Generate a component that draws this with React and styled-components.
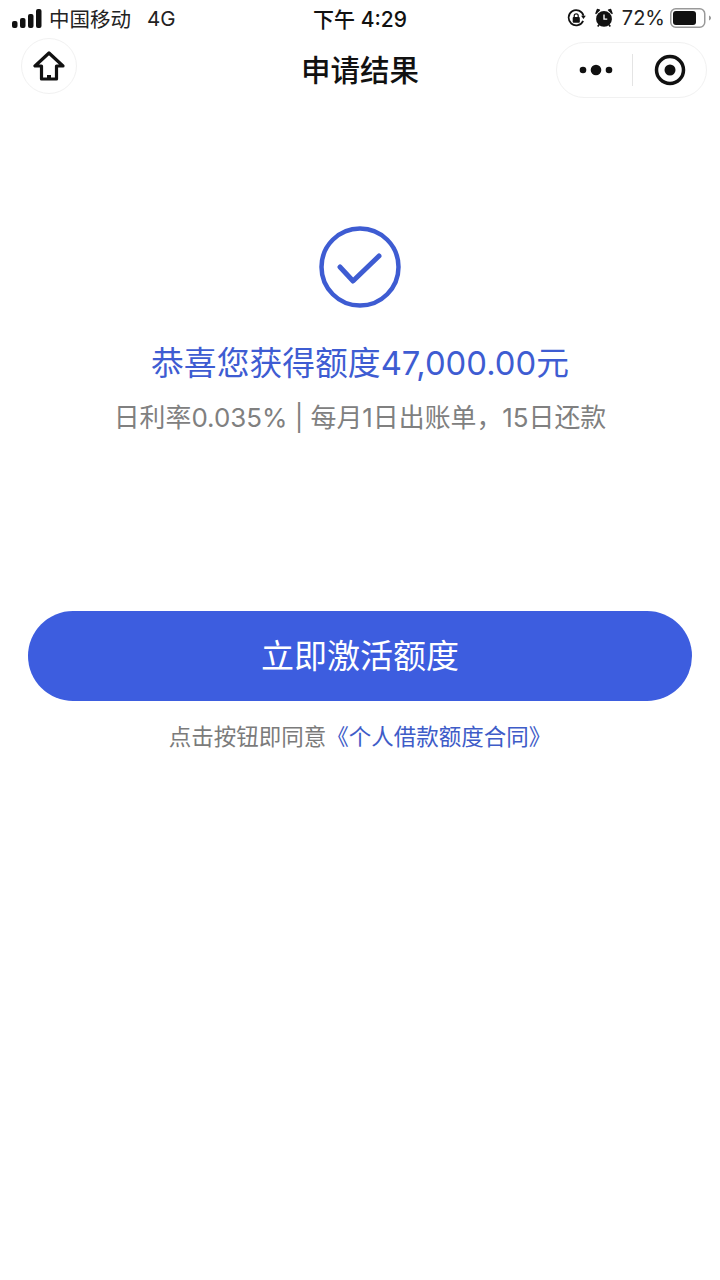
import React from "react";
import styled, { createGlobalStyle } from "styled-components";

const CJK = `"Noto Sans CJK SC", sans-serif`;
const UI = `Inter, "Noto Sans CJK SC", sans-serif`;

const Global = createGlobalStyle`
  html, body { margin: 0; padding: 0; background: #fff; }
  * { box-sizing: border-box; }
`;

const Page = styled.div`
  width: 720px;
  height: 1280px;
  overflow: hidden;
  background: #fff;
  display: flex;
  flex-direction: column;
  font-family: ${UI};
`;

const StatusBar = styled.div`
  height: 36px;
  padding: 0 9px;
  display: grid;
  grid-template-columns: 1fr auto 1fr;
  align-items: center;
  color: #111;
  font-size: 20px;
`;
const StatusLeft = styled.div`
  display: flex;
  align-items: center;
  gap: 7px;
  padding-left: 3px;
`;
const StatusRight = styled.div`
  display: flex;
  align-items: center;
  justify-content: flex-end;
  gap: 9px;
`;
const Carrier = styled.span`
  font-family: ${CJK};
  font-size: 20.5px;
  color: #222;
`;
const Network = styled.span`
  margin-left: 9px;
  font-size: 20.5px;
  color: #222;
`;
const Clock = styled.span`
  font-size: 21px;
  font-weight: 500;
`;
const Percent = styled.span`
  margin-right: -4px;
  font-size: 20px;
  color: #222;
`;

const NavBar = styled.div`
  height: 60px;
  padding: 0 13px 0 21px;
  display: flex;
  align-items: center;
  justify-content: space-between;
  position: relative;
`;
const NavTitle = styled.h1`
  position: absolute;
  left: 0;
  right: 0;
  margin: 4px 0 0;
  text-align: center;
  font-family: ${CJK};
  font-size: 29.5px;
  font-weight: 500;
  color: #111;
`;
const HomeButton = styled.div`
  width: 56px;
  height: 56px;
  border: 1px solid #f1f1f1;
  border-radius: 50%;
  display: flex;
  align-items: center;
  justify-content: center;
`;
const Capsule = styled.div`
  width: 151px;
  height: 56px;
  margin-top: 7px;
  padding-left: 2px;
  border: 1px solid #f1f1f1;
  border-radius: 28px;
  display: flex;
  align-items: center;
`;
const CapsuleCell = styled.div`
  flex: 1;
  display: flex;
  align-items: center;
  justify-content: center;
`;
const CapsuleLine = styled.div`
  width: 1px;
  height: 32px;
  background: #e4e4e4;
`;

const Result = styled.section`
  margin-top: 130px;
  display: flex;
  flex-direction: column;
  align-items: center;
`;
const Headline = styled.h2`
  margin: 32px 0 0;
  font-family: ${UI};
  font-size: 32.8px;
  line-height: 46px;
  font-weight: 400;
  color: #3e5cd2;
`;
const Terms = styled.p`
  margin: 14px 0 0;
  font-size: 25.9px;
  line-height: 36px;
  color: #808080;
`;

const Action = styled.section`
  margin-top: 175px;
  padding: 0 28px;
  display: flex;
  flex-direction: column;
  align-items: center;
`;
const Activate = styled.button`
  width: 100%;
  height: 90px;
  padding: 0 0 4px;
  border: 0;
  border-radius: 45px;
  background: #3d5ddf;
  color: #fff;
  font-family: ${CJK};
  font-size: 33px;
`;
const Agreement = styled.p`
  margin: 18px 0 0;
  font-family: ${CJK};
  font-size: 22.5px;
  line-height: 32px;
  color: #7b7b7b;
`;
const ContractLink = styled.span`
  color: #3e5cc8;
`;

const SignalIcon = () => (
  <svg width="30" height="19" viewBox="0 0 30 19" fill="#111">
    <rect x="0" y="12" width="5.500" height="7" rx="2" />
    <rect x="8" y="9" width="5.500" height="10" rx="2" />
    <rect x="16" y="5" width="5.500" height="14" rx="2" />
    <rect x="24" y="0" width="5.500" height="19" rx="2" />
  </svg>
);

const RotationLockIcon = () => (
  <svg width="19" height="19" viewBox="0 0 20 20" fill="none">
    <path d="M17 12.500A8 8 0 1 1 17.400 7" stroke="#111" strokeWidth="1.800" />
    <path d="M14.800 7.200h5l-2.500 3.200z" fill="#111" />
    <rect x="6" y="8.500" width="7.500" height="6" rx="1" fill="#111" />
    <path d="M7.600 9V7.200a2.100 2.100 0 0 1 4.200 0V9" stroke="#111" strokeWidth="1.300" />
  </svg>
);

const AlarmIcon = () => (
  <svg width="18" height="20" viewBox="0 0 20 21" fill="none">
    <circle cx="10" cy="11.500" r="8.800" fill="#111" />
    <path d="M10 6.500v5.200h3.600" stroke="#fff" strokeWidth="1.500" />
    <path d="M1 5.500 5 1.600 2.600 1z M19 5.500 15 1.600 17.400 1z" fill="#111" stroke="#111" strokeWidth="1.400" strokeLinejoin="round" />
    <path d="M4.500 18 3 20M15.500 18 17 20" stroke="#111" strokeWidth="1.800" />
  </svg>
);

const BatteryIcon = () => (
  <svg width="41" height="20" viewBox="0 0 41 20" fill="none">
    <rect x="0.750" y="0.750" width="34" height="18.500" rx="5" stroke="#999" strokeWidth="1.500" />
    <rect x="3" y="3" width="23" height="14" rx="3" fill="#111" />
    <path d="M39 7.500c1.200.4 2 1.400 2 2.500s-.8 2.100-2 2.500z" fill="#999" />
  </svg>
);

const HomeIcon = () => (
  <svg width="32" height="30" viewBox="0 0 32 30" fill="none" stroke="#111" strokeWidth="3.200" strokeLinejoin="round">
    <path d="M16 2 2 15h6.500v13h15V15H30z" />
    <path d="M16 28v-4" strokeWidth="4" />
  </svg>
);

const MoreIcon = () => (
  <svg width="34" height="12" viewBox="0 0 34 12" fill="#111">
    <circle cx="4" cy="6" r="3.300" />
    <circle cx="17" cy="6" r="5.300" />
    <circle cx="30" cy="6" r="3.300" />
  </svg>
);

const TargetIcon = () => (
  <svg width="32" height="32" viewBox="0 0 32 32" fill="none">
    <circle cx="16" cy="16" r="13.500" stroke="#111" strokeWidth="3.500" />
    <circle cx="16" cy="16" r="5.500" fill="#111" />
  </svg>
);

const SuccessIcon = () => (
  <svg width="82" height="82" viewBox="0 0 82 82" fill="none" stroke="#3e5cd2" strokeLinecap="round" strokeLinejoin="round">
    <circle cx="41" cy="41" r="38.500" strokeWidth="4.500" />
    <path d="M21 41 L34 55 L60 30" strokeWidth="5" />
  </svg>
);

export default function App() {
  return (
    <Page>
      <Global />
      <StatusBar>
        <StatusLeft>
          <SignalIcon />
          <Carrier>中国移动</Carrier>
          <Network>4G</Network>
        </StatusLeft>
        <Clock>下午 4:29</Clock>
        <StatusRight>
          <RotationLockIcon />
          <AlarmIcon />
          <Percent>72%</Percent>
          <BatteryIcon />
        </StatusRight>
      </StatusBar>
      <NavBar>
        <NavTitle>申请结果</NavTitle>
        <HomeButton>
          <HomeIcon />
        </HomeButton>
        <Capsule>
          <CapsuleCell>
            <MoreIcon />
          </CapsuleCell>
          <CapsuleLine />
          <CapsuleCell>
            <TargetIcon />
          </CapsuleCell>
        </Capsule>
      </NavBar>
      <Result>
        <SuccessIcon />
        <Headline>恭喜您获得额度47,000.00元</Headline>
        <Terms>日利率0.035% | 每月1日出账单，15日还款</Terms>
      </Result>
      <Action>
        <Activate>立即激活额度</Activate>
        <Agreement>
          点击按钮即同意<ContractLink>《个人借款额度合同》</ContractLink>
        </Agreement>
      </Action>
    </Page>
  );
}
